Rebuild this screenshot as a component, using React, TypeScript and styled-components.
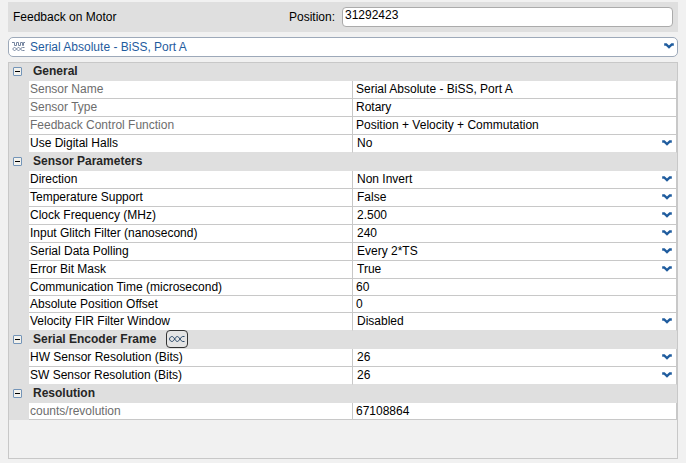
import React, { useState } from 'react';
import styled, { createGlobalStyle } from 'styled-components';

const GlobalStyle = createGlobalStyle`
  *, *::before, *::after { box-sizing: border-box; }
  body {
    margin: 0;
    background: #f1f1f1;
    color: #000;
    font: 12px/16px "Liberation Sans", Arial, sans-serif;
  }
  button, input, select { font: inherit; color: inherit; margin: 0; }
`;

const line = '#c8c8c8';
const band = '#dfdfdf';

const Page = styled.main`
  display: flex;
  flex-direction: column;
  gap: 5px;
  min-height: 100vh;
  padding: 2px 8px 4px;
`;

const Header = styled.header`
  display: grid;
  grid-template-columns: 276px 53px 1fr;
  align-items: center;
  height: 30px;
  padding: 0 5px;
  background: ${band};
`;

const Title = styled.h1`
  margin: 0;
  font-size: 12px;
  font-weight: normal;
`;

const PositionInput = styled.input`
  width: 100%;
  height: 20px;
  padding: 0 2px 4px;
  border: 1px solid #ababab;
  border-radius: 4px;
  background: #fff;
`;

const SensorPicker = styled.div`
  position: relative;
  height: 20px;
  color: #1f5c9e;
`;

const SensorSelect = styled.select`
  display: block;
  appearance: none;
  width: 100%;
  height: 20px;
  padding: 0 24px 0 21px;
  border: 1px solid #9da9b9;
  border-radius: 5px;
  background: #fff;
`;

const SensorIcon = styled.svg`
  position: absolute;
  left: 4px;
  top: 5px;
  pointer-events: none;
`;

const Chevron = styled.svg<{ $top: number }>`
  position: absolute;
  right: 4px;
  top: ${p => p.$top}px;
  pointer-events: none;
`;

const Panel = styled.section`
  flex: 1;
  border: 1px solid ${line};
`;

const Grid = styled.table`
  width: 100%;
  table-layout: fixed;
  border-collapse: separate;
  border-spacing: 0;
`;

const GutterCol = styled.col`
  width: 20px;
`;

const Gutter = styled.td`
  padding: 0;
  background: ${band};
`;

const ToggleCell = styled(Gutter)`
  padding: 4px 0 0 4px;
  vertical-align: top;
`;

const Toggle = styled.button`
  display: block;
  width: 9px;
  height: 9px;
  padding: 0;
  border: 0;
  background: none;

  svg { display: block; }
`;

const SectionCell = styled.th`
  height: 18px;
  padding: 0 4px;
  background: ${band};
  color: #262626;
  text-align: left;
  vertical-align: top;
`;

const SectionHead = styled.div`
  display: flex;
  align-items: center;
  gap: 10px;
  height: 16px;
`;

const FrameButton = styled.button`
  display: flex;
  flex: none;
  align-items: center;
  justify-content: center;
  width: 22px;
  height: 18px;
  padding: 0;
  border: 1px solid #333;
  border-radius: 4px;
  background: #e4e4e4;
`;

const Row = styled.tr<{ $height: number; $last: boolean }>`
  height: ${p => p.$height}px;
  vertical-align: top;
  --edge: ${p => (p.$last ? band : line)};
`;

const LabelCell = styled.th<{ $muted: boolean }>`
  padding: 0 0 0 1px;
  border-bottom: 1px solid var(--edge);
  border-right: 1px solid ${line};
  background: #fff;
  color: ${p => (p.$muted ? '#6d6d6d' : '#000')};
  font-weight: normal;
  line-height: 16px;
  text-align: left;
  white-space: nowrap;
`;

const ValueCell = styled.td`
  padding: 0;
  border-bottom: 1px solid var(--edge);
  border-right: 1px solid ${line};
  background: #fff;
`;

const StaticValue = styled.div`
  padding-left: 3px;
  line-height: 16px;
`;

const ValueInput = styled.input`
  display: block;
  width: 100%;
  height: 16px;
  padding: 0 3px;
  border: 0;
  background: none;
`;

const SelectWrap = styled.div`
  position: relative;
  height: 16px;
`;

const ValueSelect = styled.select`
  display: block;
  appearance: none;
  width: 100%;
  height: 16px;
  padding: 0 20px 0 4px;
  border: 0;
  background: none;
`;

const Arrow = ({ top }: { top: number }) => (
  <Chevron $top={top} width="10" height="7" viewBox="0 0 10 7" fill="none" aria-hidden="true">
    <path d="M.2 1.5 2.2 1.5 5 4.2 7.8 1.5 9.8 1.5" stroke="#1f5c9e" strokeWidth="2.3" />
  </Chevron>
);

type Kind = 'static' | 'input' | 'select';
type Property = { label: string; value: string; kind: Kind; muted?: boolean; height?: number };
type Section = { name: string; frame?: boolean; rows: Property[] };

const sections: Section[] = [
  {
    name: 'General',
    rows: [
      { label: 'Sensor Name', value: 'Serial Absolute - BiSS, Port A', kind: 'static', muted: true },
      { label: 'Sensor Type', value: 'Rotary', kind: 'static', muted: true },
      { label: 'Feedback Control Function', value: 'Position + Velocity + Commutation', kind: 'static', muted: true },
      { label: 'Use Digital Halls', value: 'No', kind: 'select' },
    ],
  },
  {
    name: 'Sensor Parameters',
    rows: [
      { label: 'Direction', value: 'Non Invert', kind: 'select' },
      { label: 'Temperature Support', value: 'False', kind: 'select' },
      { label: 'Clock Frequency (MHz)', value: '2.500', kind: 'select' },
      { label: 'Input Glitch Filter (nanosecond)', value: '240', kind: 'select' },
      { label: 'Serial Data Polling', value: 'Every 2*TS', kind: 'select' },
      { label: 'Error Bit Mask', value: 'True', kind: 'select' },
      { label: 'Communication Time (microsecond)', value: '60', kind: 'input', height: 17 },
      { label: 'Absolute Position Offset', value: '0', kind: 'input', height: 17 },
      { label: 'Velocity FIR Filter Window', value: 'Disabled', kind: 'select' },
    ],
  },
  {
    name: 'Serial Encoder Frame',
    frame: true,
    rows: [
      { label: 'HW Sensor Resolution (Bits)', value: '26', kind: 'select' },
      { label: 'SW Sensor Resolution (Bits)', value: '26', kind: 'select' },
    ],
  },
  {
    name: 'Resolution',
    rows: [{ label: 'counts/revolution', value: '67108864', kind: 'static', muted: true, height: 17 }],
  },
];

const Value = ({ id, property }: { id: string; property: Property }) => {
  if (property.kind === 'select') {
    return (
      <SelectWrap>
        <ValueSelect id={id} defaultValue={property.value}>
          <option>{property.value}</option>
        </ValueSelect>
        <Arrow top={5} />
      </SelectWrap>
    );
  }
  if (property.kind === 'input') return <ValueInput id={id} defaultValue={property.value} />;
  return <StaticValue>{property.value}</StaticValue>;
};

const PropertySection = ({ section, index, final }: { section: Section; index: number; final: boolean }) => {
  const [open, setOpen] = useState(true);
  return (
    <tbody>
      <tr>
        <ToggleCell>
          <Toggle aria-label={`Toggle ${section.name}`} aria-expanded={open} onClick={() => setOpen(!open)}>
            <svg width="9" height="9" viewBox="0 0 9 9" aria-hidden="true">
              <rect x=".5" y=".5" width="8" height="8" rx=".5" fill="#f2f1ec" stroke="#7394b8" />
              <path d={open ? 'M2 4.5h5' : 'M2 4.5h5M4.5 2v5'} stroke="#000" />
            </svg>
          </Toggle>
        </ToggleCell>
        <SectionCell colSpan={2} scope="rowgroup">
          <SectionHead>
            {section.name}
            {section.frame && (
              <FrameButton aria-label="Edit encoder frame">
                <svg width="16" height="6" viewBox="0 0 16 6" fill="none" stroke="#2c4a6b" aria-hidden="true">
                  <path d="M5.7 3C4.8 1.6 4 .5 3 .5S.5 1.6.5 3s1.500 2.500 2.500 2.500S4.800 4.400 5.700 3s1.600-2.500 2.600-2.500S10 1.600 11 3s1.800 2.500 2.800 2.500h1.700M5.700 3c.9 1.400 1.600 2.500 2.600 2.500S10 4.400 11 3s1.800-2.500 2.800-2.500h1.700" />
                </svg>
              </FrameButton>
            )}
          </SectionHead>
        </SectionCell>
      </tr>
      {open &&
        section.rows.map((property, i) => {
          const id = `property-${index}-${i}`;
          return (
            <Row key={id} $height={property.height ?? 18} $last={!final && i === section.rows.length - 1}>
              <Gutter />
              <LabelCell scope="row" $muted={!!property.muted}>
                {property.kind === 'static' ? property.label : <label htmlFor={id}>{property.label}</label>}
              </LabelCell>
              <ValueCell>
                <Value id={id} property={property} />
              </ValueCell>
            </Row>
          );
        })}
    </tbody>
  );
};

export default function App() {
  return (
    <>
      <GlobalStyle />
      <Page>
        <Header>
          <Title>Feedback on Motor</Title>
          <label htmlFor="position">Position:</label>
          <PositionInput id="position" defaultValue="31292423" />
        </Header>
        <SensorPicker>
          <SensorSelect aria-label="Sensor" defaultValue="Serial Absolute - BiSS, Port A">
            <option>Serial Absolute - BiSS, Port A</option>
          </SensorSelect>
          <SensorIcon width="13" height="9" viewBox="0 0 13 9" fill="none" stroke="#7686a0" aria-hidden="true">
            <path d="M0 .5h2.500v3h2v-3h2v3h2v-3h2v3h1v-3H13" />
            <path d="M4.500 7C3.800 6 3.300 5.500 2.500 5.500S1 6.200 1 7s.7 1.500 1.500 1.500S3.800 8 4.500 7s1.200-1.500 2-1.500S7.800 6 8.500 7s1.300 1.500 2 1.500h2M4.500 7c.7 1 1.200 1.500 2 1.500S7.800 8 8.500 7s1.300-1.500 2-1.500h2" />
          </SensorIcon>
          <Arrow top={6} />
        </SensorPicker>
        <Panel>
          <Grid>
            <colgroup>
              <GutterCol />
              <col />
              <col />
            </colgroup>
            {sections.map((section, i) => (
              <PropertySection key={section.name} section={section} index={i} final={i === sections.length - 1} />
            ))}
          </Grid>
        </Panel>
      </Page>
    </>
  );
}
